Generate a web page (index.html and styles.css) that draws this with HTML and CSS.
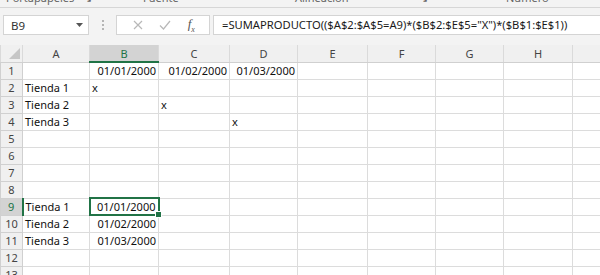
FILE: index.html
```html
<!DOCTYPE html>
<html>
<head>
    <meta charset="UTF-8">
    <title>Hoja de cálculo</title>
    <link rel="stylesheet" href="styles.css">
</head>
<body>
    <div class="ribbon">
        <span class="group g-clip">Portapapeles <i>&#8600;</i></span>
        <span class="group g-font">Fuente</span>
        <span class="group g-align">Alineación</span>
        <span class="group g-corner">&#8600;</span>
        <span class="group g-num">Número</span>
    </div>

    <div class="formula-bar">
        <div class="name-box">
            <span>B9</span>
            <svg class="arrow" width="7" height="4" viewBox="0 0 7 4"><path d="M0 0h7L3.5 4z" fill="#555"/></svg>
        </div>
        <div class="grip">
            <span></span><span></span><span></span>
        </div>
        <div class="fx-box">
            <svg width="10" height="10" viewBox="0 0 10 10"><path d="M1 1l8 8M9 1L1 9" stroke="#b8b8b8" stroke-width="1.2" fill="none"/></svg>
            <svg width="12" height="10" viewBox="0 0 12 10"><path d="M1 5.5l3.5 3.5L11 1" stroke="#b8b8b8" stroke-width="1.2" fill="none"/></svg>
            <span class="fx">f<sub>x</sub></span>
        </div>
        <div class="formula">=SUMAPRODUCTO(($A$2:$A$5=A9)*($B$2:$E$5="X")*($B$1:$E$1))</div>
    </div>

    <div class="sheet">
        <table class="grid">
            <colgroup>
                <col class="c-row"><col class="c-a"><col class="c-b"><col class="c-c"><col class="c-d">
                <col class="c-e"><col class="c-f"><col class="c-g"><col class="c-h"><col class="c-i">
            </colgroup>
            <tr class="head">
                <th class="corner"><span class="tri"></span></th>
                <th>A</th><th class="sel-col">B</th><th>C</th><th>D</th><th>E</th><th>F</th><th>G</th><th>H</th><th></th>
            </tr>
            <tr><th>1</th><td></td><td class="num">01/01/2000</td><td class="num">01/02/2000</td><td class="num">01/03/2000</td><td></td><td></td><td></td><td></td><td></td></tr>
            <tr><th>2</th><td>Tienda 1</td><td>x</td><td></td><td></td><td></td><td></td><td></td><td></td><td></td></tr>
            <tr><th>3</th><td>Tienda 2</td><td></td><td>x</td><td></td><td></td><td></td><td></td><td></td><td></td></tr>
            <tr><th>4</th><td>Tienda 3</td><td></td><td></td><td>x</td><td></td><td></td><td></td><td></td><td></td></tr>
            <tr><th>5</th><td></td><td></td><td></td><td></td><td></td><td></td><td></td><td></td><td></td></tr>
            <tr><th>6</th><td></td><td></td><td></td><td></td><td></td><td></td><td></td><td></td><td></td></tr>
            <tr><th>7</th><td></td><td></td><td></td><td></td><td></td><td></td><td></td><td></td><td></td></tr>
            <tr><th>8</th><td></td><td></td><td></td><td></td><td></td><td></td><td></td><td></td><td></td></tr>
            <tr><th class="sel-row">9</th><td>Tienda 1</td><td class="num active">01/01/2000<span class="handle"></span></td><td></td><td></td><td></td><td></td><td></td><td></td><td></td></tr>
            <tr><th>10</th><td>Tienda 2</td><td class="num">01/02/2000</td><td></td><td></td><td></td><td></td><td></td><td></td><td></td></tr>
            <tr><th>11</th><td>Tienda 3</td><td class="num">01/03/2000</td><td></td><td></td><td></td><td></td><td></td><td></td><td></td></tr>
            <tr><th>12</th><td></td><td></td><td></td><td></td><td></td><td></td><td></td><td></td><td></td></tr>
            <tr><th>13</th><td></td><td></td><td></td><td></td><td></td><td></td><td></td><td></td><td></td></tr>
        </table>
    </div>
</body>
</html>
```

FILE: styles.css
```css
body {
    margin: 0;
    width: 600px;
    height: 275px;
    overflow: hidden;
    background-color: #fff;
    font-family: "Noto Sans", "Liberation Sans", sans-serif;
    color: #222;
}

/* cinta (solo se ve la parte baja) */
.ribbon {
    height: 7px;
    overflow: hidden;
    background-color: #f3f3f3;
    border-bottom: 1px solid #d6d6d6;
    position: relative;
    font-size: 11px;
    color: #666;
}
.group {
    position: absolute;
    top: -9px;
    line-height: 14px;
    white-space: nowrap;
}
.group i {
    font-style: normal;
    margin-left: 6px;
}
.g-clip { left: 6px; }
.g-font { left: 143px; }
.g-align { left: 295px; }
.g-corner { left: 419px; }
.g-num { left: 506px; }

/* barra de fórmulas */
.formula-bar {
    height: 37px;
    background-color: #f3f3f3;
    display: flex;
    align-items: flex-start;
    padding-top: 7px;
    box-sizing: border-box;
}
.name-box {
    margin-left: 3px;
    width: 86px;
    height: 20px;
    box-sizing: border-box;
    background-color: #fff;
    border: 1px solid #d4d4d4;
    display: flex;
    align-items: center;
    justify-content: space-between;
    padding: 0 5px 0 7px;
    font-size: 11.5px;
    color: #333;
}
.grip {
    width: 27px;
    height: 20px;
    display: flex;
    flex-direction: column;
    align-items: center;
    justify-content: center;
    gap: 2px;
}
.grip span {
    width: 2px;
    height: 2px;
    background-color: #b5b5b5;
}
.fx-box {
    width: 94px;
    height: 20px;
    box-sizing: border-box;
    background-color: #fff;
    border: 1px solid #d4d4d4;
    display: flex;
    align-items: center;
    justify-content: space-around;
    padding: 0 6px 0 8px;
}
.fx {
    font-family: "Liberation Serif", serif;
    font-style: italic;
    font-size: 13px;
    color: #555;
    line-height: 1;
}
.fx sub {
    font-size: 8px;
}
.formula {
    margin-left: 3px;
    flex: 1;
    height: 20px;
    box-sizing: border-box;
    background-color: #fff;
    border: 1px solid #d4d4d4;
    border-right: none;
    padding-left: 8px;
    font-size: 11.2px;
    line-height: 18px;
    color: #1a1a1a;
    white-space: nowrap;
    overflow: hidden;
}

/* hoja */
.sheet {
    width: 600px;
    overflow: hidden;
}
.grid {
    border-collapse: collapse;
    table-layout: fixed;
    width: 640px;
    font-size: 11px;
}
.c-row { width: 22px; }
.c-a { width: 67px; }
.c-b { width: 69px; }
.c-c { width: 71px; }
.c-d { width: 68px; }
.c-e { width: 70px; }
.c-f { width: 68px; }
.c-g { width: 68px; }
.c-h { width: 69px; }
.c-i { width: 68px; }

.grid td,
.grid th {
    height: 17px;
    padding: 0 2px;
    box-sizing: border-box;
    border: 1px solid #dcdcdc;
    white-space: nowrap;
    overflow: visible;
    line-height: 15px;
    color: #111;
    font-weight: normal;
}
.grid th {
    background-color: #f0f0f0;
    color: #444;
    text-align: center;
    border-color: #d0d0d0;
    padding: 0;
}
.head th {
    border-top: none;
    border-left: 1px solid #dadada;
    border-right: 1px solid #dadada;
}
.grid td.num {
    text-align: right;
}
.corner {
    position: relative;
}
.tri {
    position: absolute;
    right: 2px;
    bottom: 3px;
    width: 0;
    height: 0;
    border-left: 11px solid transparent;
    border-bottom: 11px solid #c6c6c6;
}
.grid th.sel-col {
    background-color: #d3d3d3;
    color: #217346;
    border-bottom: 2px solid #217346;
}
.grid th.sel-row {
    background-color: #d3d3d3;
    color: #217346;
    border-right: 2px solid #217346;
}
.grid td.active {
    position: relative;
    border: 2px solid #217346;
}
.handle {
    position: absolute;
    right: -4px;
    bottom: -4px;
    width: 5px;
    height: 5px;
    background-color: #217346;
    border: 1px solid #fff;
}
```
